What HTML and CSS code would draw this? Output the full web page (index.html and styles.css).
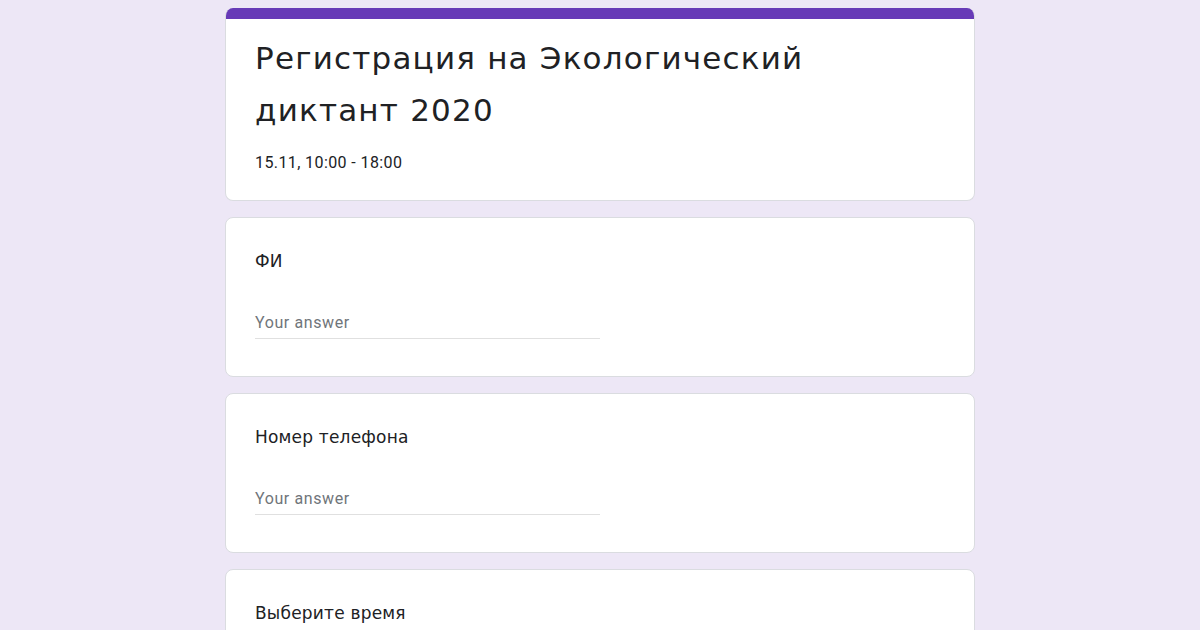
FILE: index.html
```html
<!DOCTYPE html>
<html lang="ru">
<head>
<meta charset="utf-8">
<title>Регистрация на Экологический диктант 2020</title>
<link rel="stylesheet" href="styles.css">
</head>
<body>
<main class="form">
  <section class="card header-card">
    <div class="accent-bar"></div>
    <div class="header-body">
      <h1 class="form-title">Регистрация на Экологический диктант 2020</h1>
      <p class="form-desc">15.11, 10:00 - 18:00</p>
    </div>
  </section>
  <section class="card question">
    <div class="q-title">ФИ</div>
    <div class="q-input">Your answer</div>
  </section>
  <section class="card question">
    <div class="q-title">Номер телефона</div>
    <div class="q-input">Your answer</div>
  </section>
  <section class="card question">
    <div class="q-title">Выберите время</div>
    <div class="q-input">Your answer</div>
  </section>
</main>
</body>
</html>
```
FILE: styles.css
```css
html, body {
  margin: 0;
  padding: 0;
  background: #ede7f6;
  font-family: Roboto, "Noto Sans", sans-serif;
  color: #202124;
}
.form {
  width: 750px;
  margin: 0 auto;
  padding-top: 8px;
  display: flex;
  flex-direction: column;
  gap: 16px;
}
.card {
  background: #ffffff;
  border: 1px solid #dadce0;
  border-radius: 8px;
  box-sizing: border-box;
}
.header-card {
  overflow: hidden;
  border-top: none;
}
.accent-bar {
  height: 11px;
  background: #673ab7;
}
.header-body {
  padding: 13px 29px 25px;
}
.form-title {
  margin: 0;
  font-family: "DejaVu Sans", Roboto, sans-serif;
  font-weight: 400;
  font-size: 31px;
  line-height: 52px;
  letter-spacing: 1.2px;
  width: 640px;
}
.form-desc {
  margin: 15px 0 0;
  font-size: 16px;
  line-height: 24px;
  letter-spacing: 0.4px;
}
.question {
  padding: 31px 29px 37px;
  height: 160px;
}
.q-title {
  font-family: "DejaVu Sans", Roboto, sans-serif;
  font-size: 17px;
  line-height: 24px;
  letter-spacing: 0.2px;
}
.q-input {
  margin-top: 38px;
  width: 345px;
  font-size: 16px;
  line-height: 24px;
  letter-spacing: 0.6px;
  color: #70757a;
  padding-bottom: 3px;
  border-bottom: 1px solid #e0e0e0;
}
```
